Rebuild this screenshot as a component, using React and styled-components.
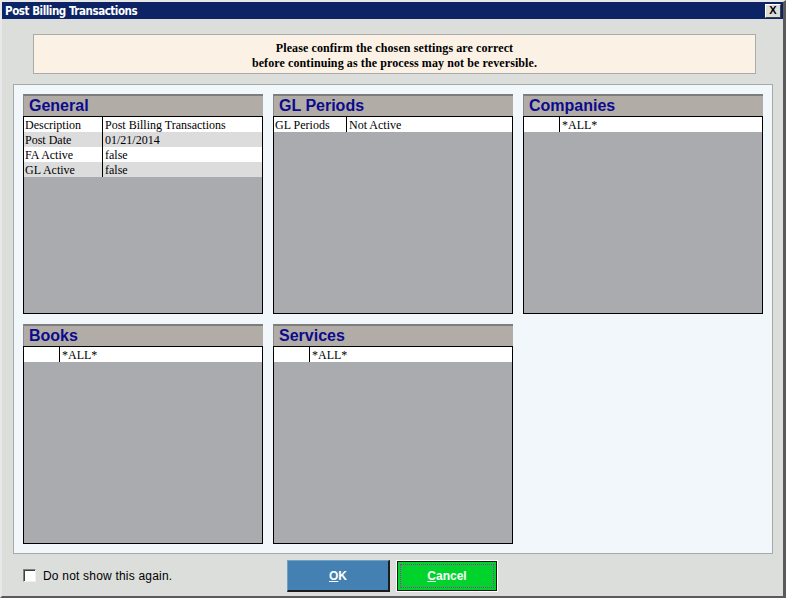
import React from "react";
import styled, { createGlobalStyle } from "styled-components";

const Global = createGlobalStyle`
  html, body { margin: 0; padding: 0; background: #dcdedb; }
  * { box-sizing: border-box; }
`;

const Window = styled.div`
  width: 786px;
  height: 598px;
  background: #dcdedb;
  border-top: 2px solid #e8e8e8;
  border-left: 2px solid #e8e8e8;
  border-right: 3px solid #5a5a5a;
  border-bottom: 2px solid #5a5a5a;
  display: flex;
  flex-direction: column;
  overflow: hidden;
`;

const TitleBar = styled.div`
  height: 17px;
  background: #0c2466;
  display: flex;
  align-items: center;
  justify-content: space-between;
  padding: 0 2px 0 3px;
  flex-shrink: 0;
`;

const Title = styled.div`
  color: #fff;
  font-family: "Liberation Sans Narrow", "DejaVu Sans Condensed", "Liberation Sans", sans-serif;
  font-weight: bold;
  font-size: 11.5px;
  letter-spacing: -0.45px;
`;

const CloseBtn = styled.div`
  width: 16px;
  height: 14px;
  background: #dcdcd8;
  border-top: 1px solid #fff;
  border-left: 1px solid #fff;
  border-right: 1px solid #404040;
  border-bottom: 1px solid #404040;
  display: flex;
  align-items: center;
  justify-content: center;
  font-family: "Liberation Sans", sans-serif;
  font-weight: bold;
  font-size: 11px;
  color: #000;
  line-height: 1;
`;

const Body = styled.div`
  flex: 1;
  display: flex;
  flex-direction: column;
  padding: 15px 0 0 11px;
`;

const Message = styled.div`
  margin-left: 20px;
  width: 723px;
  height: 40px;
  background: #fbf1e4;
  border: 1px solid #ababab;
  display: flex;
  flex-direction: column;
  justify-content: center;
  align-items: center;
  font-family: "Liberation Serif", serif;
  font-weight: bold;
  font-size: 12px;
  line-height: 15px;
  letter-spacing: 0.1px;
  color: #000;
  padding-top: 3px;
`;

const Panel = styled.div`
  margin-top: 10px;
  width: 760px;
  height: 470px;
  background: #f2f7fb;
  border: 1px solid #a9a9a9;
  padding: 9px;
  display: grid;
  grid-template-columns: repeat(3, 240px);
  grid-template-rows: repeat(2, 220px);
  gap: 10px;
`;

const Box = styled.div`
  display: flex;
  flex-direction: column;
  height: 220px;
`;

const BoxHeader = styled.div`
  height: 22px;
  background: #b2aca7;
  border-top: 2px solid #7d7d7d;
  border-left: 1px solid #8a8a8a;
  color: #0b0b8c;
  font-family: "Liberation Sans", Arial, sans-serif;
  font-weight: bold;
  font-size: 16px;
  line-height: 19px;
  padding-left: 5px;
  flex-shrink: 0;
`;

const BoxBody = styled.div`
  flex: 1;
  background: #aaabaf;
  border: 1px solid #000;
`;

const Row = styled.div`
  display: grid;
  grid-template-columns: ${(p) => p.$col}px 1fr;
  height: 15px;
  background: ${(p) => (p.$alt ? "#dcdcdc" : "#ffffff")};
  font-family: "Liberation Serif", "Times New Roman", serif;
  font-size: 12px;
  line-height: 16px;
  color: #000;
`;

const Cell = styled.div`
  padding-left: 1px;
  white-space: nowrap;
  overflow: hidden;
  & + & {
    border-left: 1px solid #000;
    padding-left: 2px;
  }
`;

const Footer = styled.div`
  display: flex;
  align-items: center;
  padding: 6px 0 0 10px;
`;

const CheckLabel = styled.label`
  width: 264px;
  display: flex;
  align-items: center;
  gap: 7px;
  font-family: "Liberation Sans", Arial, sans-serif;
  font-size: 12px;
  letter-spacing: 0.2px;
  color: #000;
  margin-top: -1px;
`;

const CheckBox = styled.span`
  width: 13px;
  height: 13px;
  background: #fff;
  border-top: 1px solid #808080;
  border-left: 1px solid #808080;
  border-right: 1px solid #f0f0f0;
  border-bottom: 1px solid #f0f0f0;
  box-shadow: inset 1px 1px 0 #404040;
`;

const Buttons = styled.div`
  display: flex;
  gap: 6px;
`;

const Button = styled.button`
  position: relative;
  width: ${(p) => p.$w}px;
  height: 32px;
  padding: 0;
  font-family: "Liberation Sans", Arial, sans-serif;
  font-weight: bold;
  font-size: 12px;
  color: #fff;
  cursor: pointer;
  u { text-decoration: underline; }
`;

const OkButton = styled(Button)`
  background: #4480b2;
  border-top: 1px solid #6fa0c8;
  border-left: 1px solid #6fa0c8;
  border-right: 2px solid #1c1c1c;
  border-bottom: 2px solid #1c1c1c;
`;

const CancelButton = styled(Button)`
  background: #00d42c;
  border: 1px solid #fff;
  box-shadow: inset 0 0 0 1px #1a1a1a;
  &::after {
    content: "";
    position: absolute;
    inset: 3px;
    border: 1px dotted #c020c0;
  }
`;

const sections = [
  {
    title: "General",
    col: 78,
    rows: [
      ["Description", "Post Billing Transactions"],
      ["Post Date", "01/21/2014"],
      ["FA Active", "false"],
      ["GL Active", "false"],
    ],
  },
  { title: "GL Periods", col: 72, rows: [["GL Periods", "Not Active"]] },
  { title: "Companies", col: 35, rows: [["", "*ALL*"]] },
  { title: "Books", col: 35, rows: [["", "*ALL*"]] },
  { title: "Services", col: 35, rows: [["", "*ALL*"]] },
];

export default function App() {
  return (
    <>
      <Global />
      <Window>
        <TitleBar>
          <Title>Post Billing Transactions</Title>
          <CloseBtn>X</CloseBtn>
        </TitleBar>
        <Body>
          <Message>
            <div>Please confirm the chosen settings are correct</div>
            <div>before continuing as the process may not be reversible.</div>
          </Message>
          <Panel>
            {sections.map((s) => (
              <Box key={s.title}>
                <BoxHeader>{s.title}</BoxHeader>
                <BoxBody>
                  {s.rows.map((r, i) => (
                    <Row key={i} $col={s.col} $alt={i % 2 === 1}>
                      <Cell>{r[0]}</Cell>
                      <Cell>{r[1]}</Cell>
                    </Row>
                  ))}
                </BoxBody>
              </Box>
            ))}
          </Panel>
          <Footer>
            <CheckLabel>
              <CheckBox />
              Do not show this again.
            </CheckLabel>
            <Buttons>
              <OkButton $w={103}>
                <u>O</u>K
              </OkButton>
              <CancelButton $w={102}>
                <u>C</u>ancel
              </CancelButton>
            </Buttons>
          </Footer>
        </Body>
      </Window>
    </>
  );
}
